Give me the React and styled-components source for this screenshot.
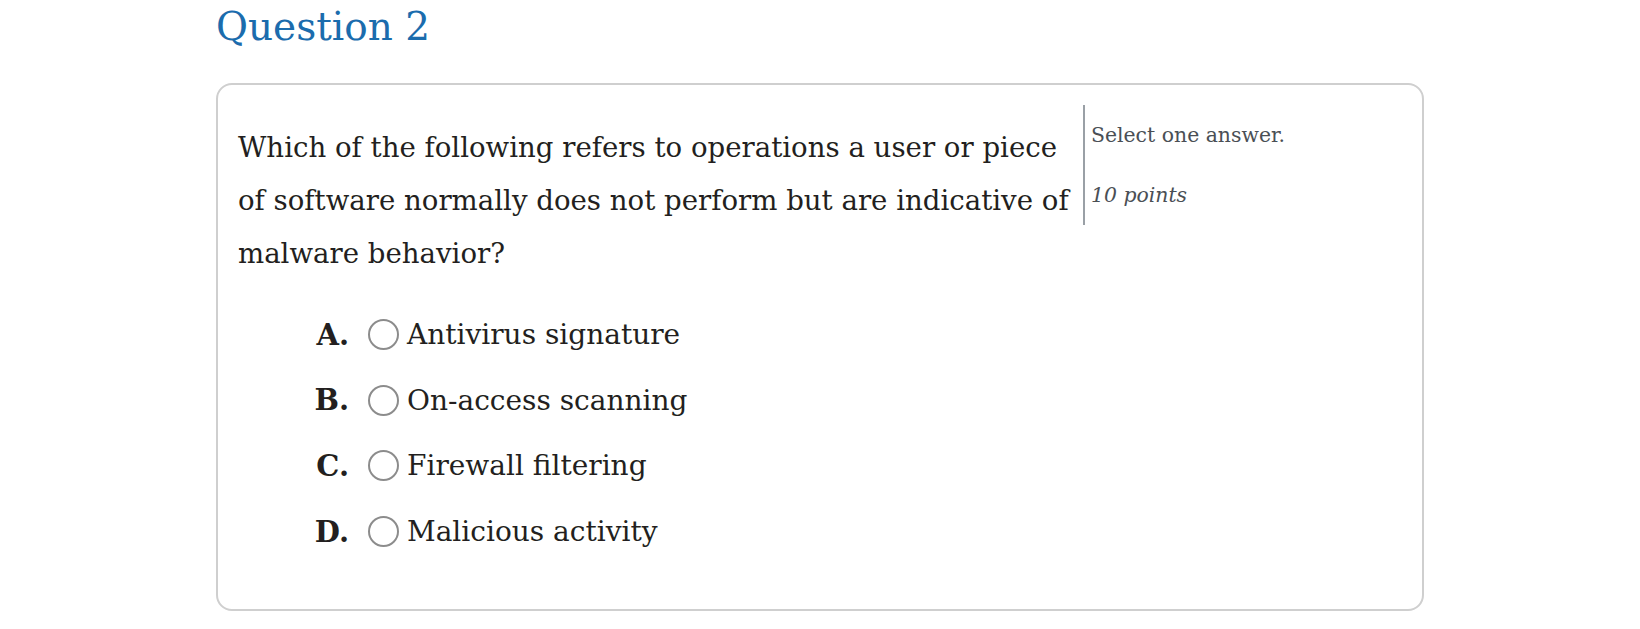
import React from "react";
import styled, { createGlobalStyle } from "styled-components";

const Global = createGlobalStyle`
  html, body { margin: 0; padding: 0; background: #fff; }
  body { font-family: "DejaVu Serif", Georgia, serif; color: #231f20; }
`;

const Page = styled.main`
  width: 1208px;
  margin: 0 auto;
`;

const Title = styled.h2`
  margin: 0;
  padding-top: 3px;
  height: 83px;
  box-sizing: border-box;
  font-family: "DejaVu Serif", serif;
  font-weight: 400;
  font-size: 39px;
  line-height: 48px;
  color: #1b6cad;
`;

const Card = styled.section`
  border: 2px solid #cfcfcf;
  border-radius: 16px;
  padding: 20px 22px 20px 20px;
  height: 528px;
  box-sizing: border-box;
`;

const Head = styled.div`
  display: grid;
  grid-template-columns: 845px 1fr;
  align-items: start;
`;

const Stem = styled.p`
  margin: 16px 0 0 0;
  font-size: 27.6px;
  line-height: 53px;
  color: #231f20;
`;

const Meta = styled.aside`
  border-left: 2px solid #9aa0a6;
  padding: 15px 0 15px 6px;
  display: flex;
  flex-direction: column;
  gap: 30px;
`;

const MetaLine = styled.div`
  font-size: 20.4px;
  line-height: 30px;
  color: #4a4f55;
  font-style: ${(p) => (p.$italic ? "italic" : "normal")};
`;

const Options = styled.ol`
  list-style: none;
  margin: 22px 0 0 0;
  padding: 0 0 0 59px;
`;

const Option = styled.li`
  display: flex;
  align-items: center;
  height: 65.6px;
  font-size: 28px;
  color: #231f20;
`;

const Letter = styled.span`
  width: 52px;
  text-align: right;
  font-weight: 700;
  font-size: 29px;
  margin-right: 19px;
`;

const Radio = styled.span`
  width: 31px;
  height: 31px;
  box-sizing: border-box;
  border: 2.5px solid #8c8c8c;
  border-radius: 50%;
  margin-right: 8px;
  flex: none;
`;

const options = [
  ["A.", "Antivirus signature"],
  ["B.", "On-access scanning"],
  ["C.", "Firewall filtering"],
  ["D.", "Malicious activity"],
];

export default function App() {
  return (
    <>
      <Global />
      <Page>
        <Title>Question 2</Title>
        <Card>
          <Head>
            <Stem>
              Which of the following refers to operations a user or piece of software normally does not perform but are indicative of malware behavior?
            </Stem>
            <Meta>
              <MetaLine>Select one answer.</MetaLine>
              <MetaLine $italic>10 points</MetaLine>
            </Meta>
          </Head>
          <Options>
            {options.map(([l, t]) => (
              <Option key={l}>
                <Letter>{l}</Letter>
                <Radio />
                <span>{t}</span>
              </Option>
            ))}
          </Options>
        </Card>
      </Page>
    </>
  );
}
